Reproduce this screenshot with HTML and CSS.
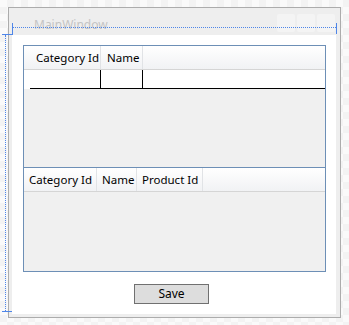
FILE: index.html
```html
<!DOCTYPE html>
<html>
<head>
<meta charset="utf-8">
<title>MainWindow</title>
<link rel="stylesheet" href="styles.css">
</head>
<body>
	<div class="window">
		<div class="titlebar">
			<span class="title">MainWindow</span>
			<div class="caption">
				<span></span>
				<span></span>
				<span></span>
			</div>
		</div>
		<div class="client">
			<div class="grids">
				<div class="grid grid1">
					<div class="head">
						<div class="rowhead"></div>
						<div class="col c1">Category Id</div>
						<div class="col c2">Name</div>
						<div class="fill"></div>
					</div>
					<div class="newrow">
						<div class="rowhead"></div>
						<div class="cell c1"></div>
						<div class="cell c2"></div>
						<div class="fill"></div>
					</div>
				</div>
				<div class="grid grid2">
					<div class="head">
						<div class="col d1">Category Id</div>
						<div class="col d2">Name</div>
						<div class="col d3">Product Id</div>
						<div class="fill"></div>
					</div>
				</div>
			</div>
			<div class="buttons">
				<div class="btn">Save</div>
			</div>
		</div>
	</div>
	<!-- design-time adorners -->
	<div class="adorn hline"></div>
	<div class="adorn htick"></div>
	<div class="adorn vline"></div>
	<div class="adorn corner"></div>
	<div class="adorn btick"></div>
</body>
</html>
```

FILE: styles.css
```css
*{margin:0;padding:0;box-sizing:border-box;}
body{
	width:349px;height:325px;overflow:hidden;position:relative;
	font-family:"Segoe UI","Noto Sans",sans-serif;font-size:11.5px;color:#000;
	background-color:#fafafa;
	background-image:conic-gradient(#f3f3f3 25%,transparent 0 50%,#f3f3f3 0 75%,transparent 0);
	background-size:14px 14px;
}
.window{
	position:absolute;left:8px;top:7px;width:333px;height:311px;
	border:1px solid #acacac;background:#eeeeee;
	padding:0 4px 3px 3px;display:flex;flex-direction:column;
}
.titlebar{height:27px;display:flex;align-items:flex-start;justify-content:space-between;flex:none;}
.title{color:#c4c4c4;padding:9px 0 0 22px;line-height:16px;font-size:12px;}
.caption{display:flex;gap:2px;padding:6px 1px 0 0;}
.caption span{width:18px;height:18px;background:#f4f4f4;border-radius:2px;}
.client{flex:1;background:#fff;display:flex;flex-direction:column;padding:10px 10px 0 11px;}
.grids{border:1px solid #6d8fb6;background:#f0f0f0;}
.grid1{height:121px;}
.grid2{height:104px;border-top:1px solid #6d8fb6;}
.head{display:flex;height:24px;border-bottom:1px solid #d5d5d5;background:linear-gradient(#ffffff,#f1f2f4);}
.head .col{border-right:1px solid #e1e3e6;line-height:24px;padding-left:6px;white-space:nowrap;}
.rowhead{width:6px;flex:none;}
.fill{flex:1;}
.c1{width:71px;}
.c2{width:42px;}
.d1{width:73px;}
.grid2 .col{padding-left:5px;}
.d2{width:40px;}
.d3{width:66px;}
.newrow{display:flex;height:19px;background:#fff;}
.newrow .cell{border-right:1px solid #000;border-bottom:1px solid #000;}
.newrow .fill{border-bottom:1px solid #000;}
.buttons{display:flex;justify-content:center;padding:12px 6px 0 0;}
.btn{width:75px;height:20px;border:1px solid #707070;background:#dddddd;text-align:center;line-height:18px;font-size:12px;}
.adorn{position:absolute;}
.hline{left:13px;top:27px;width:323px;border-top:1px dotted #4f86e8;}
.htick{left:336px;top:23px;width:1px;height:11px;background:#4f86e8;}
.vline{left:5px;top:35px;height:276px;border-left:1px dotted #4f86e8;}
.corner{left:2px;top:23px;width:11px;height:12px;border-right:1px solid #4f86e8;border-bottom:1px solid #4f86e8;}
.btick{left:2px;top:311px;width:10px;height:1px;background:#4f86e8;}
```
